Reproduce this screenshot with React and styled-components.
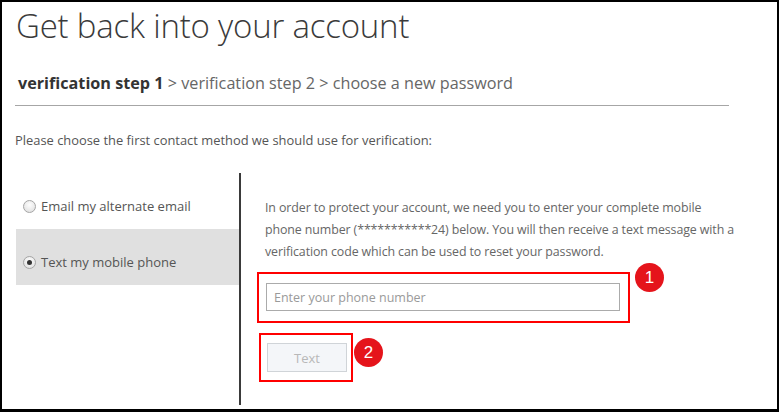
import styled, { createGlobalStyle } from "styled-components";

const Global = createGlobalStyle`
  html, body {
    margin: 0;
    padding: 0;
    background: #fff;
  }
  body {
    font-family: "Open Sans", "Liberation Sans", sans-serif;
  }
`;

const Frame = styled.div`
  box-sizing: border-box;
  width: 779px;
  height: 412px;
  border: 2px solid #000;
  border-bottom-width: 3px;
  padding-left: 13px;
  overflow: hidden;
`;

const Title = styled.h1`
  margin: 4px 0 0 1px;
  font-size: 33px;
  font-weight: 300;
  color: #3a3a3a;
  line-height: 40px;
  letter-spacing: -0.2px;
`;

const Steps = styled.div`
  margin: 26px 0 0 3px;
  font-size: 16.2px;
  color: #666;
  line-height: 22px;
`;

const Current = styled.b`
  color: #333;
  font-weight: 700;
`;

const Divider = styled.hr`
  width: 714px;
  margin: 11px 0 0;
  border: 0;
  border-top: 1px solid #a6a6a6;
`;

const Prompt = styled.p`
  margin: 25px 0 0 0;
  font-size: 12.9px;
  color: #555;
  line-height: 18px;
`;

const Columns = styled.div`
  display: flex;
  margin-top: 24px;
`;

const Options = styled.div`
  width: 223px;
  padding-left: 1px;
`;

const Option = styled.label`
  display: flex;
  align-items: center;
  gap: 5px;
  height: 56px;
  box-sizing: border-box;
  padding: 10px 0 0 7px;
  font-size: 13px;
  color: #555;
  background: ${(p) => (p.$active ? "#e0e0e0" : "transparent")};
`;

const Radio = styled.span`
  box-sizing: border-box;
  width: 13px;
  height: 13px;
  border-radius: 50%;
  border: 1px solid #a5a5a5;
  background: radial-gradient(circle at 50% 35%, #fdfdfd, #dcdcdc);
  display: flex;
  align-items: center;
  justify-content: center;
  &::after {
    content: "";
    width: 5px;
    height: 5px;
    border-radius: 50%;
    background: ${(p) => (p.$checked ? "#333" : "transparent")};
  }
`;

const Detail = styled.div`
  border-left: 2px solid #3a3a3a;
  height: 232px;
  padding-left: 16px;
`;

const Info = styled.p`
  margin: 24px 0 0 8px;
  width: 500px;
  font-size: 12.4px;
  letter-spacing: -0.1px;
  line-height: 22px;
  color: #666;
  white-space: nowrap;
`;

const Marked = styled.div`
  position: relative;
  box-sizing: border-box;
  width: ${(p) => p.$w}px;
  border: 2px solid #f00;
  padding: ${(p) => p.$pad};
  margin: ${(p) => p.$m};
`;

const Badge = styled.span`
  position: absolute;
  left: ${(p) => p.$x}px;
  top: ${(p) => p.$y}px;
  width: 29px;
  height: 29px;
  border-radius: 50%;
  background: #e5141b;
  color: #fff;
  font-family: "Liberation Sans", Arial, sans-serif;
  font-size: 17px;
  line-height: 29px;
  text-align: center;
`;

const PhoneInput = styled.input`
  box-sizing: border-box;
  width: 354px;
  height: 28px;
  border: 1px solid #ababab;
  padding: 0 7px;
  font-family: "Open Sans", "Liberation Sans", sans-serif;
  font-size: 12.5px;
  color: #333;
  outline: none;
  &::placeholder {
    color: #9a9a9a;
  }
`;

const SendButton = styled.button`
  box-sizing: border-box;
  width: 80px;
  height: 29px;
  border: 1px solid #d0d4d8;
  background: #f4f6f9;
  color: #b8b8b8;
  font-family: "Open Sans", "Liberation Sans", sans-serif;
  font-size: 13px;
  padding: 0;
`;

export default function App() {
  return (
    <>
      <Global />
      <Frame>
        <Title>Get back into your account</Title>
        <Steps>
          <Current>verification step 1</Current> &gt; verification step 2 &gt;
          choose a new password
        </Steps>
        <Divider />
        <Prompt>
          Please choose the first contact method we should use for verification:
        </Prompt>
        <Columns>
          <Options>
            <Option>
              <Radio />
              Email my alternate email
            </Option>
            <Option $active>
              <Radio $checked />
              Text my mobile phone
            </Option>
          </Options>
          <Detail>
            <Info>
              In order to protect your account, we need you to enter your
              complete mobile
              <br />
              phone number (***********24) below. You will then receive a text
              message with a
              <br />
              verification code which can be used to reset your password.
            </Info>
            <Marked $w={373} $pad="9px 7px 10px" $m="9px 0 0 0">
              <PhoneInput placeholder="Enter your phone number" />
              <Badge $x={376} $y={-11}>1</Badge>
            </Marked>
            <Marked $w={94} $pad="8px 4px 8px 6px" $m="10px 0 0 2px">
              <SendButton disabled>Text</SendButton>
              <Badge $x={93} $y={3}>2</Badge>
            </Marked>
          </Detail>
        </Columns>
      </Frame>
    </>
  );
}
